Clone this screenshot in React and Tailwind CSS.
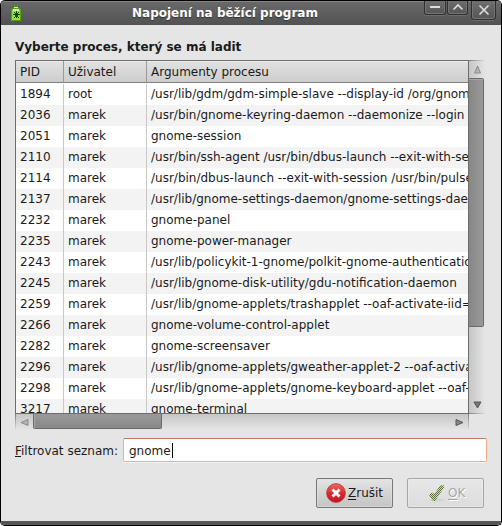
import React from 'react';

const processes = [
  ['1894', 'root', '/usr/lib/gdm/gdm-simple-slave --display-id /org/gnom'],
  ['2036', 'marek', '/usr/bin/gnome-keyring-daemon --daemonize --login'],
  ['2051', 'marek', 'gnome-session'],
  ['2110', 'marek', '/usr/bin/ssh-agent /usr/bin/dbus-launch --exit-with-se'],
  ['2114', 'marek', '/usr/bin/dbus-launch --exit-with-session /usr/bin/pulse'],
  ['2137', 'marek', '/usr/lib/gnome-settings-daemon/gnome-settings-dae'],
  ['2232', 'marek', 'gnome-panel'],
  ['2235', 'marek', 'gnome-power-manager'],
  ['2243', 'marek', '/usr/lib/policykit-1-gnome/polkit-gnome-authentication'],
  ['2245', 'marek', '/usr/lib/gnome-disk-utility/gdu-notification-daemon'],
  ['2259', 'marek', '/usr/lib/gnome-applets/trashapplet --oaf-activate-iid='],
  ['2266', 'marek', 'gnome-volume-control-applet'],
  ['2282', 'marek', 'gnome-screensaver'],
  ['2296', 'marek', '/usr/lib/gnome-applets/gweather-applet-2 --oaf-activa'],
  ['2298', 'marek', '/usr/lib/gnome-applets/gnome-keyboard-applet --oaf-a'],
  ['3217', 'marek', 'gnome-terminal'],
];

function BottleIcon() {
  return (
    <svg width="12" height="18" viewBox="0 0 12 18" shapeRendering="crispEdges">
      <path d="M4 1h4v2H4z" fill="#3f9a0c" />
      <path d="M4 3h4v1H4z" fill="#d8e8c8" />
      <path d="M2 4h8v1h1v12H1V5h1z" fill="#4aa80c" />
      <path d="M3 5h6v1h1v10H2V6h1z" fill="#93e03c" />
      <path d="M3 5h6v2H3z" fill="#d5f0b0" />
      <path d="M6 7h1v7H6zM4 8h1v1H4zM8 8h1v1H8zM5 9h3v4H5zM3 10h1v1H3zM4 10h5v1H4zM9 10h1v1H9zM4 13h1v1H4zM8 13h1v1H8z" fill="#1d4210" />
    </svg>
  );
}

function Titlebar() {
  const button =
    'flex justify-center rounded-b-[3px] border border-t-0 border-[#2f2f2f] bg-gradient-to-b from-[#6e6e6e] to-[#555] shadow-[inset_1px_-1px_0_#747474,inset_-1px_0_0_#747474,0_1px_0_#6d6d6d]';
  return (
    <header className="flex h-[25px] shrink-0 rounded-t-[4px] border-t border-black bg-gradient-to-b from-[#6a6a6a] to-[#525252] shadow-[inset_0_1px_0_#858585]">
      <div className="w-[73px] shrink-0 pl-[9px] pt-[3px]"><BottleIcon /></div>
      <h1 className="flex-1 pl-[58px] pt-[4px] text-[12px] leading-[16px] font-bold text-white [text-shadow:0_1px_1px_#333]">Napojení na běžící program</h1>
      <div className="flex w-[77px] shrink-0 items-start">
        <div className={`${button} h-[14px] w-[22px]`}>
          <svg width="12" height="12"><path d="M1 6h10" stroke="#ddd" strokeWidth="2" /></svg>
        </div>
        <div className={`${button} ml-px h-[14px] w-[21px]`}>
          <svg width="12" height="12"><path d="M1.500 8.500L6 4L10.500 8.500" stroke="#ddd" strokeWidth="1.600" fill="none" /></svg>
        </div>
        <div className={`${button} ml-[3px] h-[19px] w-[25px]`}>
          <svg width="12" height="16"><path d="M1.500 4.500L10.500 13.500M10.500 4.500L1.500 13.500" stroke="#ddd" strokeWidth="1.600" /></svg>
        </div>
      </div>
    </header>
  );
}

function ProcessTable() {
  return (
    <div className="h-[354px] w-[454px] shrink-0 overflow-hidden border border-[#6d6d6d] bg-white">
      <div className="flex h-[22px] border-b border-[#808080] bg-gradient-to-b from-[#e2e2e2] to-[#cdcdcd] shadow-[inset_0_1px_0_#eee] leading-[23px]">
        <div className="w-[48px] shrink-0 border-r border-[#9a9a9a] pl-[4px]">PID</div>
        <div className="w-[83px] shrink-0 border-r border-[#9a9a9a] pl-[4px]">Uživatel</div>
        <div className="pl-[4px]">Argumenty procesu</div>
      </div>
      <div className="pt-px">
        {processes.map(([pid, user, args]) => (
          <div key={pid} className="flex h-[21px] leading-[21px] whitespace-nowrap even:bg-[#f3f3f3]">
            <div className="w-[48px] shrink-0 border-r border-[#c8c8c8] pl-[4px]">{pid}</div>
            <div className="w-[83px] shrink-0 border-r border-[#c8c8c8] pl-[4px]">{user}</div>
            <div className="pl-[4px]">{args}</div>
          </div>
        ))}
      </div>
    </div>
  );
}

function VerticalScrollbar() {
  return (
    <div className="flex h-[354px] w-[16px] shrink-0 flex-col border-y border-[#aaa] [border-image:linear-gradient(to_right,#777,#e5e5e5)_1] bg-gradient-to-r from-[#c6c6c6] to-[#e5e5e5]">
      <div className="flex h-[17px] justify-center pt-[4px]">
        <svg width="9" height="9"><path d="M4.500 1L7.500 8H1.500z" fill="#b4b4b4" stroke="#8a8a8a" /></svg>
      </div>
      <div className="h-[249px] w-[15px] rounded-r-[2px] border border-l-0 border-[#6a6a6a] bg-gradient-to-r from-[#878787] to-[#999] shadow-[inset_0_1px_0_#a8a8a8]" />
      <div className="flex flex-1 items-end justify-center pb-[4px]">
        <svg width="9" height="8"><path d="M1 1h7L4.500 7z" fill="#777" stroke="#555" /></svg>
      </div>
    </div>
  );
}

function HorizontalScrollbar() {
  return (
    <div className="flex h-[16px] w-[454px] shrink-0 border-x border-[#aaa] [border-image:linear-gradient(to_bottom,#777,#e5e5e5)_1] bg-gradient-to-b from-[#c6c6c6] to-[#e5e5e5]">
      <div className="flex w-[17px] shrink-0 items-center pl-[4px]">
        <svg width="9" height="9"><path d="M8 1.500v6L1 4.500z" fill="#b4b4b4" stroke="#8a8a8a" /></svg>
      </div>
      <div className="h-[15px] w-[129px] rounded-b-[2px] border border-t-0 border-[#6a6a6a] bg-gradient-to-b from-[#999] to-[#888] shadow-[inset_1px_0_0_#a8a8a8]" />
      <div className="flex flex-1 items-center justify-end pr-[4px]">
        <svg width="9" height="9"><path d="M1 1.500v6L8 4.500z" fill="#888" stroke="#555" /></svg>
      </div>
    </div>
  );
}

function CancelIcon() {
  return (
    <svg width="20" height="20" viewBox="0 0 20 20">
      <defs>
        <linearGradient id="cancelRed" x2="0" y2="1">
          <stop stopColor="#ee6a62" />
          <stop offset=".5" stopColor="#d92a32" />
          <stop offset="1" stopColor="#bd1823" />
        </linearGradient>
      </defs>
      <circle cx="10" cy="10" r="9.400" fill="url(#cancelRed)" stroke="#ad3a3a" strokeWidth=".8" />
      <path d="M6.500 6.500l7 7M13.500 6.500l-7 7" stroke="#fff" strokeWidth="2.900" />
    </svg>
  );
}

function OkIcon() {
  return (
    <svg width="17" height="18" viewBox="0 0 17 18">
      <defs>
        <pattern id="stipple" width="2" height="2" patternUnits="userSpaceOnUse">
          <path d="M0 0h1v1H0zM1 1h1v1H1z" fill="#5c7430" />
          <path d="M1 0h1v1H1zM0 1h1v1H0z" fill="#cfd6bd" />
        </pattern>
      </defs>
      <ellipse cx="9" cy="16" rx="7.500" ry="1.500" fill="#d2d2d2" />
      <path d="M1 11L4 8.500l2.500 1.500L12 1.500l3.500-.5L16 3.500L9 14L7 17H5z" fill="url(#stipple)" />
    </svg>
  );
}

export default function App() {
  return (
    <div className="h-[526px] w-[502px] overflow-hidden bg-white font-['DejaVu_Sans',sans-serif] text-[12px] text-[#1a1a1a]">
      <div className="flex h-[526px] w-[502px] flex-col overflow-hidden rounded-[5px] border-x border-b border-black bg-[#e5e5e5]">
        <Titlebar />
        <main className="flex flex-1 flex-col pl-[14px]">
          <h2 className="h-[35px] pt-[14px] leading-[16px] font-bold">Vyberte proces, který se má ladit</h2>
          <div className="flex">
            <ProcessTable />
            <VerticalScrollbar />
          </div>
          <HorizontalScrollbar />
          <div className="mt-[8px] flex h-[24px] items-center">
            <label className="w-[108px] shrink-0 pt-[2px]"><u className="underline-offset-1">F</u>iltrovat seznam:</label>
            <div className="flex h-[24px] w-[364px] items-center rounded-[2px] border border-[#eaae8c] border-t-[#b97864] bg-white pl-[5px] shadow-[0_1px_0_#f2f2f2]">
              <span className="pt-[2px]">gnome</span>
              <span className="ml-px h-[15px] w-px bg-black" />
            </div>
          </div>
          <div className="mt-[16px] flex gap-[14px] pl-[301px]">
            <button className="flex h-[30px] w-[77px] items-center gap-[2px] rounded-[2px] border border-[#777] bg-gradient-to-b from-[#e4e4e4] to-[#c4c4c4] pl-[9px] shadow-[inset_0_0_0_1px_#e4e4e488]">
              <CancelIcon />
              <span><u className="underline-offset-2">Z</u>rušit</span>
            </button>
            <button className="flex h-[30px] w-[77px] items-center gap-[3px] rounded-[2px] border border-[#a6a6a6] bg-gradient-to-b from-[#e7e7e7] to-[#dcdcdc] pl-[20px] text-[#a6a6a6] shadow-[inset_0_0_0_1px_#eeeeee88] [text-shadow:1px_1px_0_#fff]">
              <OkIcon />
              <span><u className="underline-offset-2">O</u>K</span>
            </button>
          </div>
        </main>
        <footer className="h-[4px] shrink-0 bg-[#565656]" />
      </div>
    </div>
  );
}
